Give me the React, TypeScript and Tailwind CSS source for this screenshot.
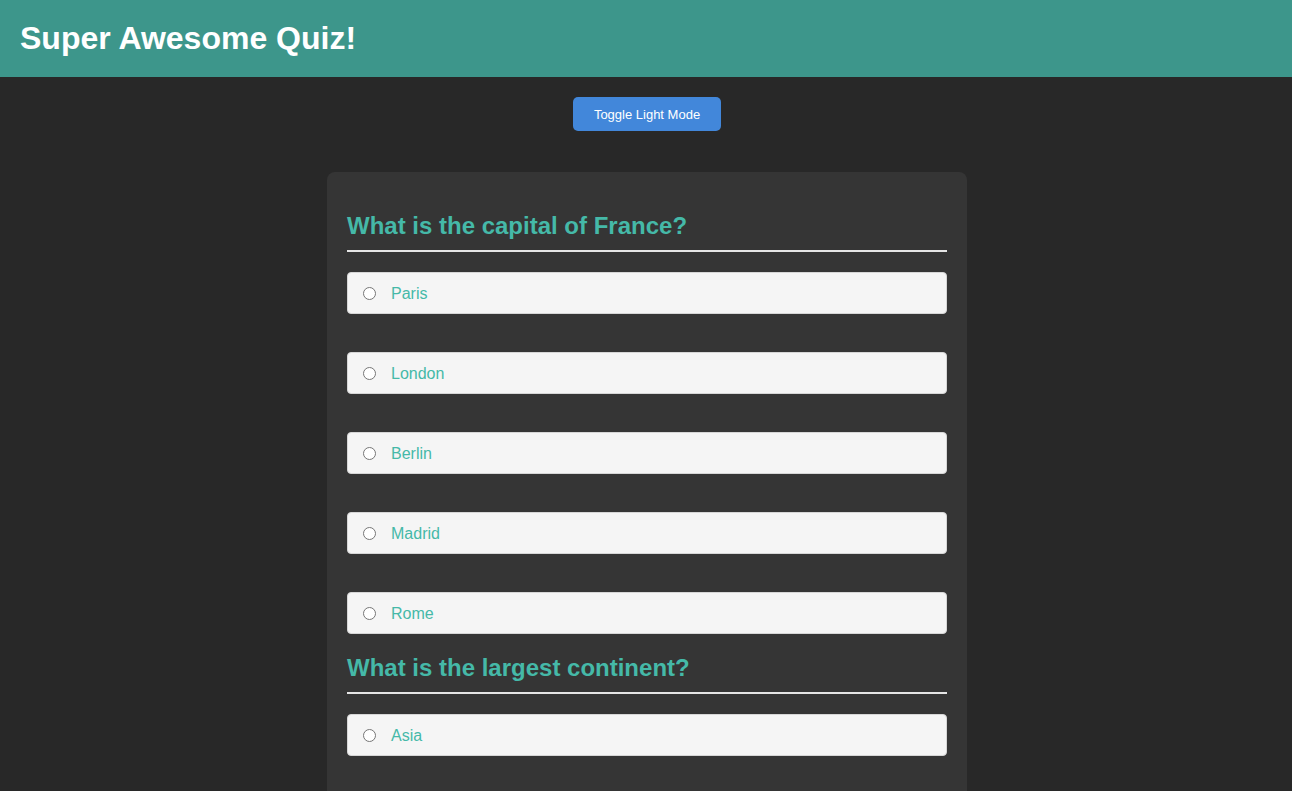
const questions = [
  {
    q: "What is the capital of France?",
    options: ["Paris", "London", "Berlin", "Madrid", "Rome"],
  },
  {
    q: "What is the largest continent?",
    options: ["Asia", "Africa", "North America", "Europe", "Antarctica"],
  },
];

export default function App() {
  return (
    <div className="min-h-screen bg-[#282828] font-['Liberation_Sans',Arial,sans-serif]">
      {/* Header */}
      <header className="bg-[#3d968b] px-5 py-5">
        <h1 className="text-[32px] font-bold leading-[37px] text-white">Super Awesome Quiz!</h1>
      </header>

      <div className="flex justify-center pt-5 pl-[2px]">
        <button className="h-[34px] rounded-[5px] bg-[#4287da] px-[21px] pt-[1px] text-[13px] text-white">
          Toggle Light Mode
        </button>
      </div>

      {/* Quiz card */}
      <div className="pl-[2px]">
        <div className="mx-auto mt-[41px] w-[640px] rounded-lg bg-[#353535] px-5 pt-5 pb-5">
          {questions.map((item) => (
            <section key={item.q}>
              <h2 className="mt-5 mb-5 border-b-2 border-[#e6e6e6] pb-[10px] text-[24px] font-bold leading-[28px] text-[#45b9a8]">
                {item.q}
              </h2>
              <div className="flex flex-col gap-[38px]">
                {item.options.map((opt) => (
                  <label
                    key={opt}
                    className="flex h-[42px] items-center rounded-[4px] border border-[#d6d6d6] bg-[#f5f5f5] pl-[15px]"
                  >
                    <span className="h-[13px] w-[13px] rounded-full border border-[#767676] bg-white" />
                    <span className="ml-[15px] pt-[2px] text-[16px] text-[#45b9a8]">{opt}</span>
                  </label>
                ))}
              </div>
            </section>
          ))}
        </div>
      </div>
    </div>
  );
}
